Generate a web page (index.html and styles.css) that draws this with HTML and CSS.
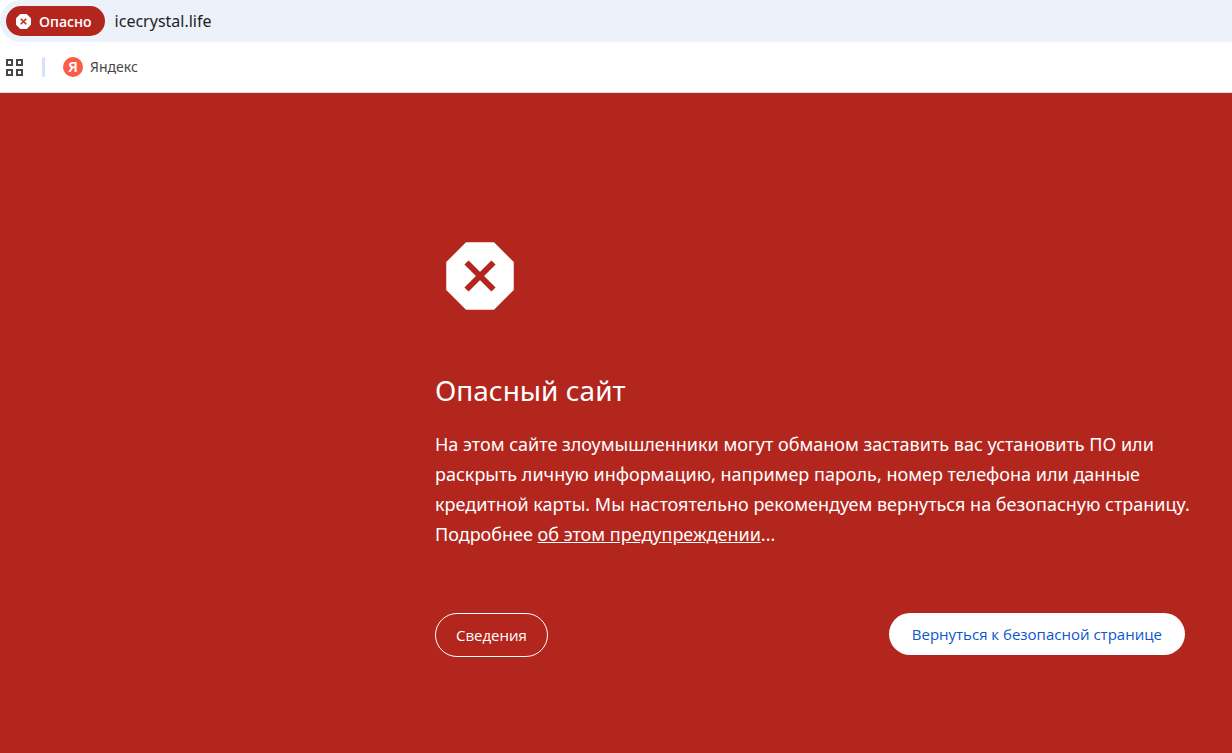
FILE: index.html
```html
<!DOCTYPE html>
<html lang="ru">
<head>
    <meta charset="UTF-8">
    <meta name="viewport" content="width=device-width, initial-scale=1.0">
    <title>Опасный сайт</title>
    <link rel="stylesheet" href="styles.css">
</head>
<body>
    <header>
        <div class="address-bar">
            <button class="chip" type="button">
                <svg class="chip-icon" viewBox="0 0 16 16" aria-hidden="true">
                    <path fill="#fff" d="M5 1h6L15 5v6L11 15H5L1 11V5z" stroke="#fff" stroke-width="2" stroke-linejoin="round"/>
                    <path d="M5 5l6 6M11 5l-6 6" stroke="#b3261e" stroke-width="1.6"/>
                </svg>
                Опасно
            </button>
            <input class="url" type="text" value="icecrystal.life" aria-label="Адрес">
        </div>
        <nav class="bookmarks">
            <button class="apps" type="button" aria-label="Приложения">
                <svg viewBox="0 0 19 19" fill="none" stroke="#474747" stroke-width="2" aria-hidden="true">
                    <path d="M2 2h5v5H2zM12 2h5v5h-5zM2 12h5v5H2zM12 12h5v5h-5z"/>
                </svg>
            </button>
            <span class="divider"></span>
            <a class="bookmark" href="#"><span class="ya-logo" aria-hidden="true">Я</span>Яндекс</a>
        </nav>
    </header>
    <main>
        <div class="warning">
            <svg class="warning-icon" viewBox="0 0 24 24" aria-hidden="true">
                <path fill="#fff" d="M15.730 3H8.270L3 8.270v7.460L8.270 21h7.460L21 15.730V8.270z"/>
                <path d="M8.400 8.400l7.200 7.200M15.600 8.400l-7.200 7.200" stroke="#b3261e" stroke-width="1.600"/>
            </svg>
            <h1>Опасный сайт</h1>
            <p>На этом сайте злоумышленники могут обманом заставить вас установить ПО или<br>
            раскрыть личную информацию, например пароль, номер телефона или данные<br>
            кредитной карты. Мы настоятельно рекомендуем вернуться на безопасную страницу.<br>
            Подробнее <a href="#">об этом предупреждении</a>...</p>
            <div class="buttons">
                <button class="button details" type="button">Сведения</button>
                <button class="button back" type="button">Вернуться к безопасной странице</button>
            </div>
        </div>
    </main>
</body>
</html>
```

FILE: styles.css
```css
* {
    margin: 0;
    padding: 0;
    box-sizing: border-box;
}
body {
    display: flex;
    flex-direction: column;
    min-height: 100vh;
    font-family: 'Noto Sans', 'Open Sans', sans-serif;
    background: #fff;
}
button {
    font-family: 'Open Sans', 'Noto Sans', sans-serif;
    border: none;
    cursor: pointer;
}
.address-bar {
    display: flex;
    align-items: center;
    gap: 10px;
    height: 42px;
    padding-left: 6px;
    background: #ecf1fa;
    border-radius: 21px 0 0 21px;
}
.chip {
    display: flex;
    align-items: center;
    gap: 8px;
    height: 30px;
    padding: 0 13px 0 10px;
    border-radius: 15px;
    background: #b3261e;
    color: #fff;
    font-size: 14px;
    font-weight: 600;
}
.chip-icon {
    width: 15px;
    height: 15px;
}
.url {
    flex: 1;
    border: none;
    outline: none;
    background: none;
    font-family: inherit;
    font-size: 16px;
    color: #1f1f1f;
}
.bookmarks {
    display: flex;
    align-items: center;
    height: 51px;
    padding-left: 5px;
    border-bottom: 1px solid #e0e0e0;
}
.apps {
    width: 19px;
    height: 19px;
    background: none;
}
.apps svg {
    display: block;
}
.divider {
    width: 3px;
    height: 20px;
    margin: 0 18px;
    border-radius: 2px;
    background: #d3e3fd;
}
.bookmark {
    display: flex;
    align-items: center;
    gap: 7px;
    font-size: 14px;
    line-height: 18px;
    color: #474747;
    text-decoration: none;
}
.ya-logo {
    width: 20px;
    height: 20px;
    border-radius: 50%;
    background: #fc5b46;
    color: #fff;
    font-size: 15px;
    font-weight: 600;
    line-height: 19px;
    text-align: center;
}
main {
    flex: 1;
    padding: 138px 47px 40px;
    background: #b3261e;
    color: #fff;
}
.warning {
    max-width: 750px;
    margin-left: auto;
}
.warning-icon {
    display: block;
    width: 90px;
    height: 90px;
    margin-bottom: 50px;
}
h1 {
    margin-bottom: 20px;
    font-size: 28px;
    font-weight: 400;
    line-height: 38px;
}
p {
    margin-right: -20px;
    font-size: 18px;
    line-height: 30px;
}
p a {
    color: #fff;
}
.buttons {
    display: flex;
    flex-wrap: wrap;
    align-items: flex-start;
    justify-content: space-between;
    gap: 10px;
    margin-top: 64px;
}
.button {
    height: 42px;
    padding: 0 20px;
    border-radius: 22px;
    font-size: 15px;
}
.details {
    height: 44px;
    background: none;
    border: 1px solid #fff;
    color: #fff;
}
.back {
    padding: 0 23px;
    background: #fff;
    color: #0b57d0;
}
```
